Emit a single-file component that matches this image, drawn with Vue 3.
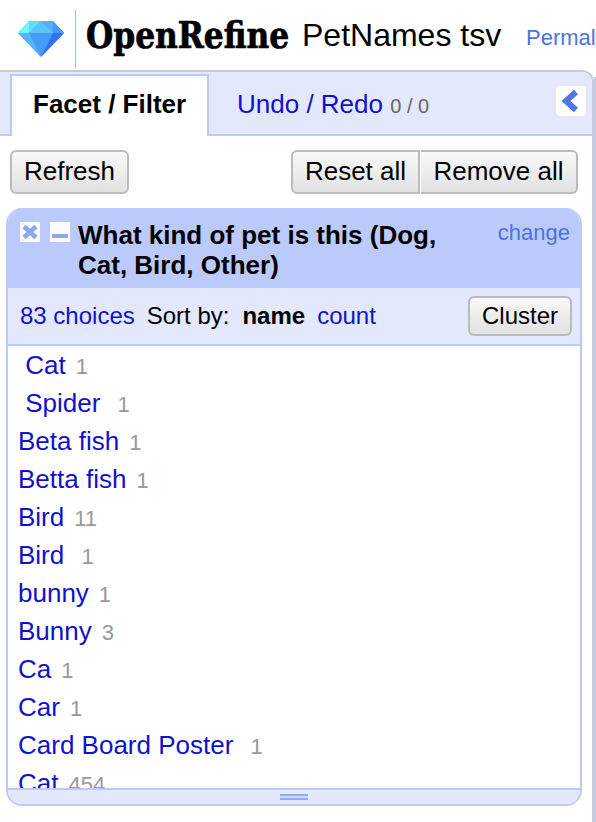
<script setup>
const choices = [
  { name: ' Cat', count: 1 },
  { name: ' Spider ', count: 1 },
  { name: 'Beta fish', count: 1 },
  { name: 'Betta fish', count: 1 },
  { name: 'Bird', count: 11 },
  { name: 'Bird ', count: 1 },
  { name: 'bunny', count: 1 },
  { name: 'Bunny', count: 3 },
  { name: 'Ca', count: 1 },
  { name: 'Car', count: 1 },
  { name: 'Card Board Poster ', count: 1 },
  { name: 'Cat', count: 454 },
]
</script>

<template>
  <div class="app">
    <header class="header">
      <svg class="gem" viewBox="0 0 46 36" width="46" height="36">
        <path d="M11 0h24l11 12-23 24L0 12z" fill="#469bf8" />
        <path d="M11 0L0 12h11z" fill="#72f6ff" />
        <path d="M11 0h12L11 12z" fill="#66dcfd" />
        <path d="M23 0h12v12z" fill="#50b0fa" />
        <path d="M11 12L23 0l12 12z" fill="#5cc2fb" />
        <path d="M35 0l11 12H35z" fill="#4799f9" />
        <path d="M0 12h11l12 24z" fill="#57b4fa" />
        <path d="M46 12H35L23 36z" fill="#2f70f6" />
      </svg>
      <div class="divider"></div>
      <div class="brand"><span>OpenRefine</span></div>
      <div class="project">PetNames tsv</div>
      <a class="permalink">Permalink</a>
    </header>
    <main class="body">
      <section class="left">
        <nav class="tabs">
          <div class="tab active">Facet / Filter</div>
          <div class="tab">Undo / Redo <small>0 / 0</small></div>
          <button class="collapse" aria-label="Hide">
            <svg viewBox="0 0 30 30" width="30" height="30">
              <path d="M20 6L10 15l10 9" fill="none" stroke="#5078de" stroke-width="6" />
            </svg>
          </button>
        </nav>
        <div class="controls">
          <button class="btn">Refresh</button>
          <div class="group">
            <button class="btn first">Reset all</button>
            <button class="btn last">Remove all</button>
          </div>
        </div>
        <article class="facet">
          <div class="facet-title">
            <svg class="icon" viewBox="0 0 20 20" width="20" height="20">
              <rect width="20" height="20" rx="1" fill="#fbfcff" />
              <path d="M4 4.5l12 11M16 4.5l-12 11" stroke="#8ca8e8" stroke-width="4.6" />
            </svg>
            <svg class="icon" viewBox="0 0 20 20" width="20" height="20">
              <rect width="20" height="20" rx="1" fill="#fbfcff" />
              <path d="M2 12h16v4H2z" fill="#8ca8e8" />
            </svg>
            <h2>What kind of pet is this (Dog,<br />Cat, Bird, Other)</h2>
            <a class="change">change</a>
          </div>
          <div class="facet-controls">
            <a>83 choices</a>
            <span class="sort">Sort by:</span>
            <b>name</b>
            <a class="by-count">count</a>
            <button class="btn cluster">Cluster</button>
          </div>
          <div class="list">
            <div v-for="(c, i) in choices" :key="i" class="choice">
              <a>{{ c.name }}</a><span>{{ c.count }}</span>
            </div>
          </div>
          <div class="handle"><i></i></div>
        </article>
      </section>
      <aside class="right"></aside>
    </main>
  </div>
</template>

<style>
body {
  margin: 0;
  overflow: hidden;
  background: #fff;
}
</style>

<style scoped>
* {
  box-sizing: border-box;
}
.app {
  width: 596px;
  height: 822px;
  overflow: hidden;
  display: flex;
  flex-direction: column;
  font: 26px/30px "Liberation Sans", Arial, sans-serif;
  color: #000;
}
a {
  color: #1111cc;
}
.header {
  height: 70px;
  flex: none;
  display: flex;
  align-items: flex-start;
  white-space: nowrap;
}
.gem {
  flex: none;
  margin: 21px 0 0 18px;
}
.divider {
  flex: none;
  width: 1px;
  height: 58px;
  margin: 10px 0 0 11px;
  background: #a3b5ef;
}
.brand {
  flex: none;
  width: 226px;
  padding: 13px 0 0 10px;
  font: bold 37px/44px "DejaVu Serif Condensed", "DejaVu Serif", serif;
  font-stretch: condensed;
}
.brand span {
  display: inline-block;
  transform: scaleX(0.94);
  transform-origin: 0 0;
  -webkit-text-stroke: 0.7px #000;
}
.project {
  flex: none;
  width: 224px;
  padding-top: 17px;
  font-size: 32px;
  line-height: 36px;
}
.permalink {
  padding-top: 25px;
  font-size: 22px;
  line-height: 26px;
  color: #4c73dc;
}
.body {
  flex: 1;
  display: flex;
}
.left {
  width: 594px;
  flex: none;
  border: 2px solid #ccc;
  border-width: 2px 2px 0 0;
  border-radius: 0 12px 0 0;
  overflow: hidden;
}
.right {
  width: 2px;
  margin-top: 7px;
  background: #bccafb;
}
.tabs {
  height: 64px;
  display: flex;
  padding: 2px 0 0 10px;
  background: linear-gradient(#bccafb, #bccafb) 0 62px / 100% 2px no-repeat #e3e8fc;
}
.tab {
  height: 62px;
  padding: 15px 0 0 28px;
  white-space: nowrap;
  color: #1111cc;
}
.tab small {
  font-size: 20px;
  color: #666;
}
.tab.active {
  width: 199px;
  padding: 13px 0 0 21px;
  border: 2px solid #bccafb;
  border-bottom: 0;
  background: #fff;
  color: #000;
  font-weight: bold;
}
.collapse {
  width: 30px;
  height: 30px;
  margin: 12px 6px 0 auto;
  padding: 0;
  border: 0;
  border-radius: 4px;
  background: #fff;
}
.collapse svg {
  display: block;
}
.controls {
  display: flex;
  justify-content: space-between;
  padding: 14px 14px 14px 10px;
}
.group {
  display: flex;
  gap: 1px;
}
.btn {
  height: 44px;
  width: 119px;
  padding: 0 0 2px;
  border: 2px solid #bbb;
  border-radius: 6px;
  background: linear-gradient(#f9f9f9, #e1e1e1);
  font: inherit;
  color: #000;
  white-space: nowrap;
}
.btn.first {
  width: 129px;
  border-radius: 6px 0 0 6px;
}
.btn.last {
  width: 157px;
  border-left-width: 0;
  border-radius: 0 6px 6px 0;
}
.facet {
  width: 576px;
  height: 598px;
  margin-left: 6px;
  display: flex;
  flex-direction: column;
  border: 2px solid #bccafb;
  border-top: 0;
  border-radius: 16px;
  overflow: hidden;
}
.facet-title {
  height: 80px;
  flex: none;
  display: flex;
  align-items: flex-start;
  padding: 12px 10px 0 12px;
  background: #bccafb;
}
.icon {
  flex: none;
  margin: 2px 10px 0 0;
}
h2 {
  margin: 0 0 0 -2px;
  font-size: 26px;
  line-height: 30px;
  white-space: nowrap;
}
.change {
  margin: 0 0 0 auto;
  font-size: 22px;
  line-height: 26px;
  color: #4c73dc;
}
.facet-controls {
  height: 58px;
  flex: none;
  display: flex;
  align-items: center;
  padding: 0 8px 0 12px;
  border-bottom: 2px solid #bccafb;
  background: #e3e8fc;
  font-size: 24px;
  white-space: nowrap;
}
.sort {
  margin: 0 13px 0 12px;
}
.by-count {
  margin-left: 12px;
}
.cluster {
  width: 104px;
  height: 40px;
  margin-left: auto;
  padding: 0;
}
.list {
  height: 442px;
  flex: none;
  overflow: hidden;
}
.choice {
  height: 38px;
  padding: 4px 0 0 10px;
  white-space: pre;
}
.choice span {
  margin-left: 10px;
  font-size: 22px;
  color: #999;
}
.handle {
  flex: 1;
  display: flex;
  justify-content: center;
  padding-top: 4px;
  border-top: 2px solid #bccafb;
  background: #e3e8fc;
}
.handle i {
  width: 28px;
  height: 6px;
  border: 2px solid #94abef;
  border-width: 2px 0;
  background: #cbd8fc;
}
</style>
